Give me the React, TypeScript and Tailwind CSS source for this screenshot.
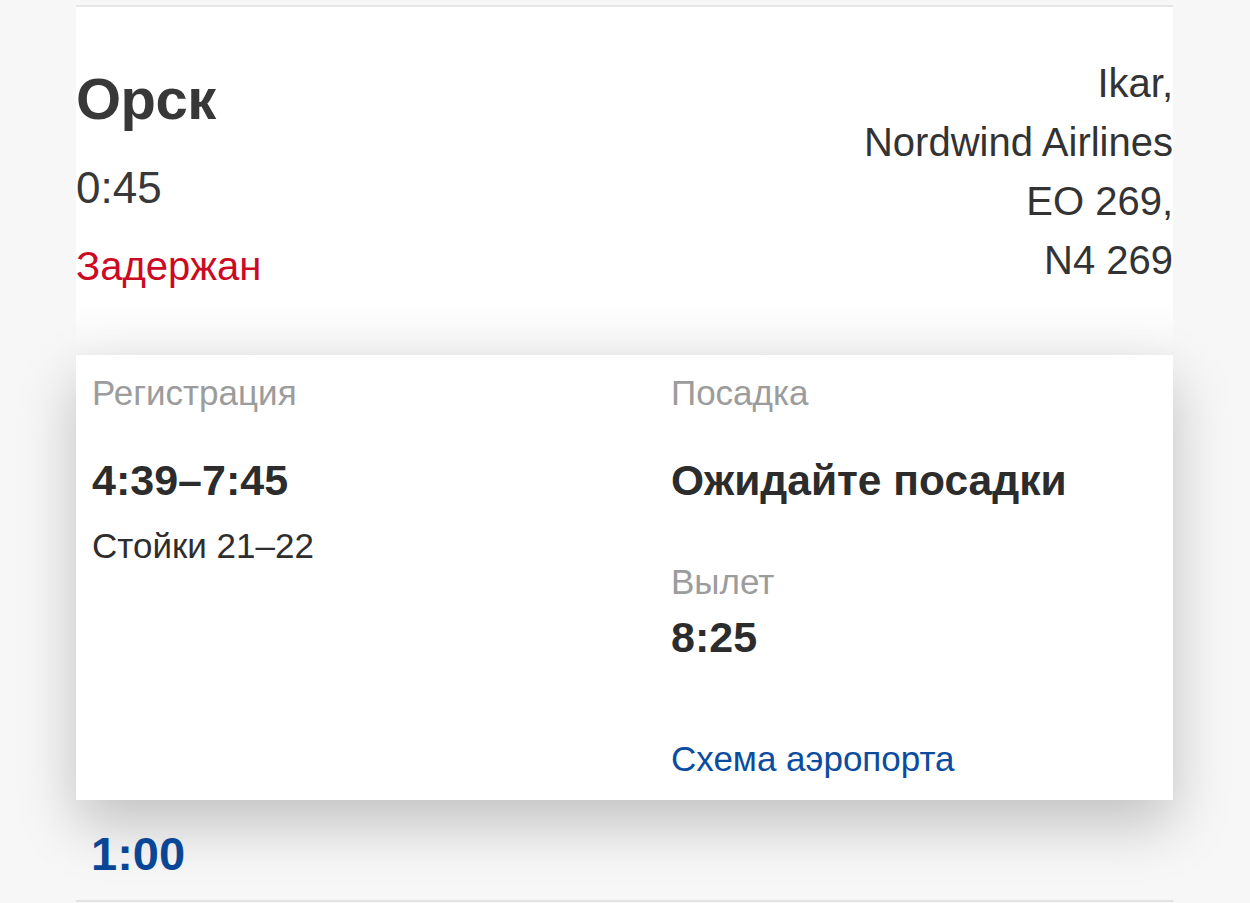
import React from "react";

export default function App() {
  return (
    <div
      className="w-full h-[903px] overflow-hidden bg-[#f7f7f7] pl-[76px] pr-[77px]"
      style={{ fontFamily: '"Liberation Sans", Arial, sans-serif' }}
    >
      <div className="mt-[5px] h-[2px] bg-[#e6e6e6]" />

      {/* Flight header */}
      <div className="h-[348px] bg-linear-to-b from-white from-85% to-[#f6f6f6] flex justify-between">
        <div className="flex flex-col pt-[63px]">
          <div className="text-[58px] leading-[58px] font-bold text-[#383838] tracking-[-0.5px]">Орск</div>
          <div className="mt-[38px] text-[44px] leading-[44px] text-[#383838]">0:45</div>
          <div className="mt-[36px] text-[40px] leading-[40px] text-[#cc0a24]">Задержан</div>
        </div>
        <div className="pt-[47px] text-right text-[40px] leading-[59px] text-[#333333]">
          <div>Ikar,</div>
          <div>Nordwind Airlines</div>
          <div>EO 269,</div>
          <div>N4 269</div>
        </div>
      </div>

      {/* Expanded details panel */}
      <div className="relative z-10 h-[445px] bg-white shadow-[0_24px_55px_rgba(0,0,0,0.22)] grid grid-cols-[579px_1fr] pl-[16px]">
        <div className="flex flex-col pt-[20px]">
          <div className="text-[35px] leading-[35px] text-[#9c9c9c]">Регистрация</div>
          <div className="mt-[49px] text-[43px] leading-[43px] font-bold text-[#2c2c2c]">4:39–7:45</div>
          <div className="mt-[26px] text-[35px] leading-[35px] text-[#2e2e2e]">Стойки 21–22</div>
        </div>
        <div className="flex flex-col pt-[20px]">
          <div className="text-[35px] leading-[35px] text-[#9c9c9c]">Посадка</div>
          <div className="mt-[50px] text-[42.5px] leading-[42px] font-bold text-[#2c2c2c]">Ожидайте посадки</div>
          <div className="mt-[62px] text-[35px] leading-[35px] text-[#9c9c9c]">Вылет</div>
          <div className="mt-[17px] text-[43px] leading-[43px] font-bold text-[#2c2c2c]">8:25</div>
          <div className="mt-[82px] text-[35px] leading-[35px] text-[#0c4c9f]">Схема аэропорта</div>
        </div>
      </div>

      {/* Next flight row */}
      <div className="relative z-20 h-[100px] pl-[15px] pt-[30px]">
        <div className="text-[47px] leading-[47px] font-bold text-[#0a4696]">1:00</div>
      </div>
      <div className="relative z-20 h-[2px] bg-[#e2e2e2]" />
    </div>
  );
}
